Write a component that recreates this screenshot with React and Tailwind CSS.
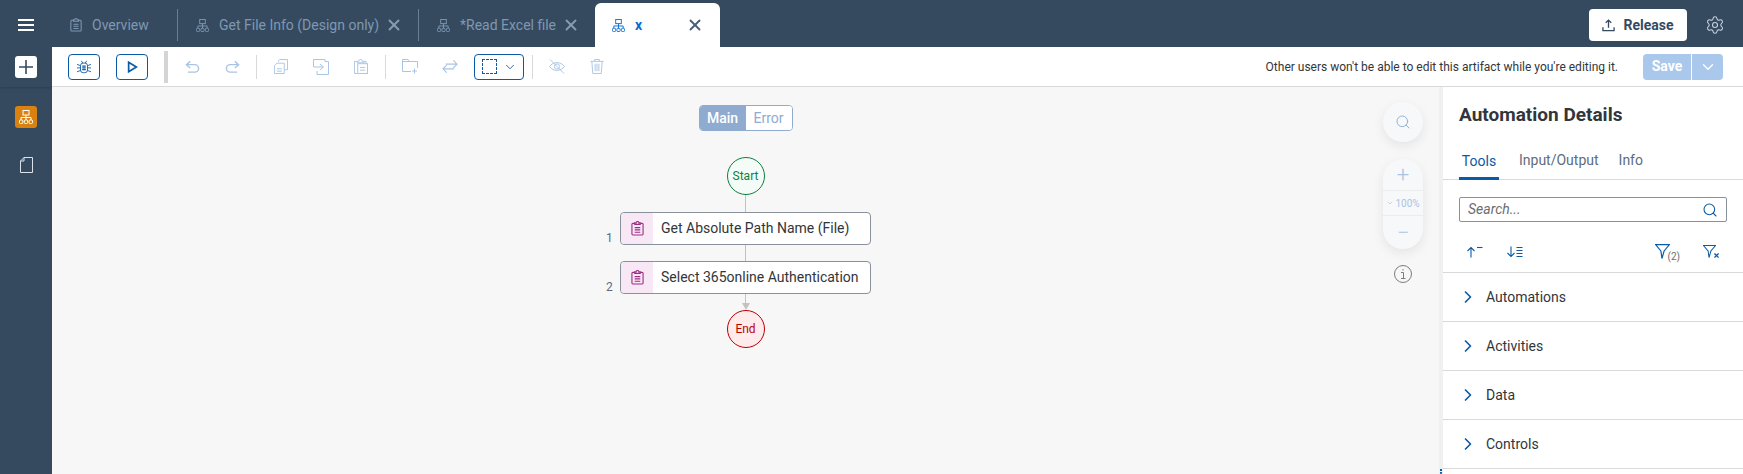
import { ChevronDown, ChevronRight, Search, Settings, X } from "lucide-react";

const Network = ({ className }) => (
  <svg viewBox="0 0 14 14" fill="none" stroke="currentColor" strokeWidth="1" className={className}>
    <rect x="4" y="0.5" width="6" height="4.500" />
    <path d="M7 5V7.500M2 10V7.500H12V10M7 7.500V10" />
    <rect x="0.5" y="10" width="3.400" height="3.500" rx="1" />
    <rect x="5.300" y="10" width="3.400" height="3.500" rx="1" />
    <rect x="10.100" y="10" width="3.400" height="3.500" rx="1" />
  </svg>
);

const Clipboard = ({ className }) => (
  <svg viewBox="0 0 14 16" fill="none" stroke="currentColor" strokeWidth="1.200" className={className}>
    <path d="M4 2.500H2a1 1 0 0 0-1 1v10.500a1 1 0 0 0 1 1h10a1 1 0 0 0 1-1V3.500a1 1 0 0 0-1-1h-2" />
    <path d="M4 3.500V2h1.500a1.500 1.500 0 0 1 3 0H10v1.500z" />
    <path d="M4 7h6M4 9.500h6M4 12h6" />
  </svg>
);

const Bug = ({ className }) => (
  <svg viewBox="0 0 18 16" fill="none" stroke="currentColor" strokeWidth="1" className={className}>
    <rect x="5" y="3.500" width="8" height="11" rx="3" />
    <path d="M7 7h4M7 9h4M7 11h4" strokeWidth="1.400" />
    <path d="M6 1l1.500 2.500M12 1l-1.500 2.500M1 5l4 1.500M17 5l-4 1.500M1 9h4M17 9h-4M1 13.500l4-1.500M17 13.500l-4-1.500" />
  </svg>
);

const Play = ({ className }) => (
  <svg viewBox="0 0 12 14" fill="none" stroke="currentColor" strokeWidth="2" className={className}>
    <path d="M1.500 1.500V12.500L10.500 7z" />
  </svg>
);

const Undo = ({ className, flip }) => (
  <svg viewBox="0 0 16 14" fill="none" stroke="currentColor" strokeWidth="1.500" className={`${className} ${flip ? "-scale-x-100" : ""}`}>
    <path d="M5.500 1L1.500 4.500L5.500 8" />
    <path d="M2 4.500H10.500a4 4 0 0 1 0 8H3" />
  </svg>
);

const CopyDocs = ({ className }) => (
  <svg viewBox="0 0 15 16" fill="none" stroke="currentColor" strokeWidth="1" className={className}>
    <path d="M5 3V1.500L6 .5h8.500v11H11" />
    <path d="M3 4.500H11V15.500H.5V7z" />
    <path d="M3 10.500h5.500M3 13h5.500" />
  </svg>
);

const MoveDoc = ({ className }) => (
  <svg viewBox="0 0 16 16" fill="none" stroke="currentColor" strokeWidth="1" className={className}>
    <path d="M.5 8V.5H12V2.500H15.500V15.500H4V12" />
    <path d="M1 8H10M7 5l3.500 3L7 11" />
  </svg>
);

const Paste = ({ className }) => (
  <svg viewBox="0 0 15 16" fill="none" stroke="currentColor" strokeWidth="1" className={className}>
    <path d="M3.500 2.500H.5V15.500H3.500" />
    <path d="M11 2.500H13V5" />
    <rect x="4" y="5" width="10.500" height="10.500" />
    <path d="M3.500 4V2.500H5a2 2 0 0 1 4 0h2V4z" />
    <path d="M6.500 9h5.500M6.500 12h5.500" />
  </svg>
);

const FolderPlus = ({ className }) => (
  <svg viewBox="0 0 16 15" fill="none" stroke="currentColor" strokeWidth="1" className={className}>
    <path d="M9 12.500H.5V.5H6L7.500 2.500H15.500V9" />
    <path d="M.5 2.500H7.500M12.500 9.500V14.500M10 12H15" />
  </svg>
);

const Swap = ({ className }) => (
  <svg viewBox="0 0 17 16" fill="none" stroke="currentColor" strokeWidth="1.200" className={className}>
    <path d="M4 5.500H16M12 1.500L16 5.500L12 9.500" />
    <path d="M13 10.500H1M5 6.500L1 10.500L5 14.500" />
  </svg>
);

const EyeOff = ({ className }) => (
  <svg viewBox="0 0 17 16" fill="none" stroke="currentColor" strokeWidth="1" className={className}>
    <path d="M.5 8C4.500 2.500 12.500 2.500 16.500 8C12.500 13.500 4.500 13.500 .5 8z" />
    <circle cx="8.500" cy="8" r="2.800" />
    <path d="M1 .5L16 15.500" />
  </svg>
);

const Trash = ({ className }) => (
  <svg viewBox="0 0 14 16" fill="none" stroke="currentColor" strokeWidth="1" className={className}>
    <path d="M0 2.500H14M4.500 2.500V.5H9.500V2.500" />
    <path d="M1.500 2.500L2.500 15.500H11.500L12.500 2.500" />
    <path d="M5 5V13M7 5V13M9 5V13" />
  </svg>
);

const Upload = ({ className }) => (
  <svg viewBox="0 0 14 14" fill="none" stroke="currentColor" strokeWidth="1.400" className={className}>
    <path d="M7 9.500V1.500M4 4L7 1.200L10 4" />
    <path d="M1 9V12.500H13V9" />
  </svg>
);

const SortAsc = ({ className }) => (
  <svg viewBox="0 0 17 12" fill="none" stroke="currentColor" strokeWidth="1.100" className={className}>
    <path d="M5 11.500V1.500M1.500 5L5 1.500L8.500 5" />
    <path d="M11 1.500H16.500" />
  </svg>
);

const SortDesc = ({ className }) => (
  <svg viewBox="0 0 17 12" fill="none" stroke="currentColor" strokeWidth="1.100" className={className}>
    <path d="M5 .5V10.500M1.500 7L5 10.500L8.500 7" />
    <path d="M10.500 1.500H16.500M10.500 4.500H16.500M10.500 7.500H16.500M10.500 10.500H16.500" />
  </svg>
);

const Funnel = ({ className }) => (
  <svg viewBox="0 0 14 14" fill="none" stroke="currentColor" strokeWidth="1.100" className={className}>
    <path d="M.5 .5H13.500L8.500 6.500L6.500 13.500L5.500 6.500z" />
  </svg>
);

const ToolbarSlot = ({ children }) => (
  <div className="w-10 flex justify-center items-center text-[#a9c4e4]">{children}</div>
);

const ToolbarSep = ({ className = "mx-1" }) => <div className={`w-px h-6 bg-[#d9d9d9] ${className}`} />;

const Tab = ({ label, icon, closable = true, width, last }) => (
  <>
    <div className={`flex items-center pl-[18px] text-[#7f98b2] ${width}`}>
      {icon}
      <span className="ml-[10px] whitespace-nowrap">{label}</span>
      {closable && <X className="w-[18px] h-[18px] ml-[6px] text-[#8a9bae]" strokeWidth={2.500} />}
    </div>
    {!last && <div className="w-px h-8 self-center bg-[#6a7e92]" />}
  </>
);

const FlowNode = ({ num, label }) => (
  <div className="relative w-[251px] h-[33px] flex items-center bg-white border border-[#89919a] rounded-[4px]">
    <span className="absolute left-[-15px] top-[16px] text-[12px] text-[#556b82]">{num}</span>
    <div className="w-8 h-full bg-[#f8e8f5] rounded-l-[4px] flex items-center justify-center">
      <Clipboard className="w-[13px] h-[15px] text-[#9c2f84]" />
    </div>
    <span className="ml-[8px] text-[14px] text-[#32363a] whitespace-nowrap">{label}</span>
  </div>
);

const AccordionRow = ({ label }) => (
  <div className="h-[49px] flex items-center border-b border-[#d9d9d9] pl-[15px]">
    <ChevronRight className="w-5 h-5 text-[#0a5aa6]" strokeWidth={2} />
    <span className="ml-[8px] text-[14px] text-[#32363a]">{label}</span>
  </div>
);

export default function App() {
  return (
    <div className="h-screen w-full flex flex-col overflow-hidden text-[14px] bg-white font-['Roboto',sans-serif]">
      {/* Header with tabs */}
      <div className="h-[47px] shrink-0 flex pt-[3px] bg-[#354a5f]">
        <div className="w-[52px] flex items-center justify-center">
          <div className="w-4 flex flex-col gap-[3px]">
            <div className="h-[2px] bg-white" />
            <div className="h-[2px] bg-white" />
            <div className="h-[2px] bg-white" />
          </div>
        </div>
        <Tab label="Overview" closable={false} width="w-[125px]" icon={<Clipboard className="w-[12px] h-[14px]" />} />
        <Tab label="Get File Info (Design only)" width="w-[240px]" icon={<Network className="w-[13px] h-[13px]" />} />
        <Tab label="*Read Excel file" width="w-[176px]" last icon={<Network className="w-[13px] h-[13px]" />} />
        <div className="w-[125px] flex items-center bg-white rounded-t-[6px] pl-[17px]">
          <Network className="w-[13px] h-[13px] text-[#0a6ed1]" />
          <span className="ml-[10px] font-bold text-[#0a6ed1]">x</span>
          <X className="w-[18px] h-[18px] ml-auto mr-[16px] text-[#4b6076]" strokeWidth={2.500} />
        </div>
        <div className="ml-auto flex items-center">
          <button className="w-[98px] h-8 bg-white rounded-[4px] flex items-center justify-center gap-[8px] font-bold text-[#354a5f]">
            <Upload className="w-[13px] h-[13px]" />
            Release
          </button>
          <Settings className="w-5 h-5 mx-[18px] text-[#c6d4e2]" strokeWidth={1.300} />
        </div>
      </div>

      <div className="flex-1 flex min-h-0">
        {/* Left rail */}
        <div className="w-[52px] shrink-0 flex flex-col items-center bg-[#354a5f]">
          <div className="w-full h-[40px] flex justify-center pt-[9px] shadow-[0_1px_2px_rgba(0,0,0,0.15)]">
            <div className="w-[22px] h-[22px] bg-white rounded-[3px] flex items-center justify-center">
              <svg viewBox="0 0 14 14" className="w-[14px] h-[14px] text-[#354a5f]" stroke="currentColor" strokeWidth="1.600">
                <path d="M7 0V14M0 7H14" />
              </svg>
            </div>
          </div>
          <div className="w-[22px] h-[22px] mt-[19px] bg-[#d9820f] rounded-[3px] flex items-center justify-center">
            <Network className="w-[14px] h-[14px] text-white" />
          </div>
          <svg viewBox="0 0 13 16" fill="none" stroke="#dbe2ea" strokeWidth="1" className="w-[13px] h-[16px] mt-[29px]">
            <path d="M4 .5H12.500V15.500H.5V4z" />
            <path d="M4 .5V4H.5" />
          </svg>
        </div>

        <div className="flex-1 min-w-0 flex flex-col">
          {/* Toolbar */}
          <div className="h-[40px] shrink-0 flex items-center pl-4 bg-white border-b border-[#d9d9d9]">
            <button className="w-8 h-[26px] border border-[#0a5aa6] rounded-[4px] flex items-center justify-center text-[#0a5aa6]">
              <Bug className="w-[16px] h-[14px]" />
            </button>
            <button className="w-8 h-[26px] ml-4 border border-[#0a5aa6] rounded-[4px] flex items-center justify-center text-[#0a5aa6]">
              <Play className="w-[11px] h-[12px]" />
            </button>
            <div className="w-1 h-8 ml-4 mr-1 bg-[#d4d4d4]" />
            <ToolbarSlot><Undo className="w-[15px] h-[14px]" /></ToolbarSlot>
            <ToolbarSlot><Undo flip className="w-[15px] h-[14px]" /></ToolbarSlot>
            <ToolbarSep />
            <ToolbarSlot><CopyDocs className="w-[14px] h-[15px]" /></ToolbarSlot>
            <ToolbarSlot><MoveDoc className="w-[16px] h-[16px]" /></ToolbarSlot>
            <ToolbarSlot><Paste className="w-[14px] h-[15px]" /></ToolbarSlot>
            <ToolbarSep />
            <ToolbarSlot><FolderPlus className="w-[16px] h-[15px]" /></ToolbarSlot>
            <ToolbarSlot><Swap className="w-[16px] h-[15px]" /></ToolbarSlot>
            <button className="w-[50px] h-[26px] ml-1 border border-[#0a5aa6] rounded-[4px] flex items-center justify-center gap-[6px]">
              <div className="w-[15px] h-[15px] border border-dashed border-[#0a5aa6]" />
              <ChevronDown className="w-[14px] h-[14px] text-[#0a5aa6]" strokeWidth={1.500} />
            </button>
            <ToolbarSep className="ml-2 mr-1" />
            <ToolbarSlot><EyeOff className="w-[16px] h-[15px]" /></ToolbarSlot>
            <ToolbarSlot><Trash className="w-[14px] h-[15px]" /></ToolbarSlot>
            <span className="ml-auto text-[12px] text-[#32363a] whitespace-nowrap">
              Other users won't be able to edit this artifact while you're editing it.
            </span>
            <div className="flex h-[26px] ml-[25px] mr-[20px] text-white">
              <div className="w-[48px] bg-[#a9c8ec] rounded-l-[4px] flex items-center justify-center font-bold">Save</div>
              <div className="w-[31px] ml-px bg-[#a9c8ec] rounded-r-[4px] flex items-center justify-center">
                <ChevronDown className="w-[18px] h-[18px]" strokeWidth={1.800} />
              </div>
            </div>
          </div>

          <div className="flex-1 min-h-0 flex">
            {/* Canvas */}
            <div className="relative flex-1 min-w-0 flex flex-col items-center pt-[18px] bg-[#f7f7f7]">
              <div className="flex w-[94px] h-[26px] border border-[#8fabcf] rounded-[4px] overflow-hidden">
                <div className="w-[46px] bg-[#8fabcf] flex items-center justify-center text-white font-medium text-[14px]">Main</div>
                <div className="flex-1 bg-white flex items-center justify-center text-[#8fabcf] text-[14px]">Error</div>
              </div>
              <div className="w-[38px] h-[38px] mt-[26px] rounded-full border border-[#107e3e] bg-[#f3fcf6] flex items-center justify-center text-[12px] text-[#107e3e]">
                Start
              </div>
              <div className="w-px h-[17px] bg-[#c2c2c2]" />
              <FlowNode num="1" label="Get Absolute Path Name (File)" />
              <div className="w-px h-[16px] bg-[#c2c2c2]" />
              <FlowNode num="2" label="Select 365online Authentication" />
              <div className="w-px h-[9px] bg-[#c2c2c2]" />
              <div className="w-0 h-0 border-x-[4px] border-x-transparent border-t-[7px] border-t-[#c2c2c2]" />
              <div className="w-[38px] h-[38px] rounded-full border border-[#bb0000] bg-[#ffebeb] flex items-center justify-center text-[12px] text-[#bb0000]">
                End
              </div>

              {/* Zoom controls */}
              <div className="absolute right-[16px] top-[15px] w-10 flex flex-col items-center">
                <div className="w-10 h-10 rounded-full bg-[#f7f8fa] shadow-[0_4px_12px_rgba(0,0,0,0.08)] flex items-center justify-center">
                  <Search className="w-[16px] h-[16px] text-[#8fb1da]" strokeWidth={1.500} />
                </div>
                <div className="w-10 h-[90px] mt-[17px] rounded-full bg-[#f7f8fa] shadow-[0_4px_12px_rgba(0,0,0,0.08)] flex flex-col items-center text-[#a9c4e4]">
                  <div className="h-[32px] w-full flex items-center justify-center border-b border-[#ececec] text-[22px] font-light">+</div>
                  <div className="h-[25px] w-full flex items-center justify-center border-b border-[#ececec] text-[10px] whitespace-nowrap">
                    <ChevronDown className="w-[8px] h-[8px] mr-px" />100%
                  </div>
                  <div className="flex-1 flex items-center justify-center text-[22px] font-light">−</div>
                </div>
                <svg viewBox="0 0 18 18" fill="none" stroke="#7c7c7c" strokeWidth="1" className="w-[18px] h-[18px] mt-[16px]">
                  <circle cx="9" cy="9" r="8.500" />
                  <path d="M7 7.500H9.500V13.500M7 13.500H11.500M9 4V5.500" />
                </svg>
              </div>
            </div>

            {/* Right panel */}
            <div className="w-[304px] shrink-0 bg-white border-l-[4px] border-[#f0f0f0] relative">
              <div className="absolute -left-[3px] bottom-0 w-[2px] h-[5px] border-l-2 border-dotted border-[#0a5aa6]" />
              <div className="h-[42px] pl-[16px] flex items-end text-[19px] font-bold text-[#32363a]">Automation Details</div>
              <div className="h-[51px] flex items-end gap-[20px] pl-[16px] border-b border-[#d9d9d9]">
                <div className="h-[34px] w-[40px] flex justify-center pt-[5px] border-b-[3px] border-[#0a5aa6] text-[#0a5aa6] -mb-px">Tools</div>
                <div className="h-[34px] pt-[5px] text-[#5c6d7e]">Input/Output</div>
                <div className="h-[34px] pt-[5px] text-[#5c6d7e]">Info</div>
              </div>
              <div className="h-[93px] pt-[17px] px-[16px] border-b border-[#d9d9d9]">
                <div className="h-[25px] flex items-center justify-between px-[8px] border border-[#89919a] rounded-[2px]">
                  <span className="italic text-[#6a6d70]">Search...</span>
                  <Search className="w-[16px] h-[16px] text-[#0a5aa6]" strokeWidth={1.600} />
                </div>
                <div className="flex items-center mt-[22px] text-[#0a5aa6]">
                  <SortAsc className="w-[17px] h-[12px] ml-[7px]" />
                  <SortDesc className="w-[17px] h-[12px] ml-[23px]" />
                  <div className="ml-auto flex items-end">
                    <Funnel className="w-[15px] h-[15px]" />
                    <span className="text-[10px] leading-none text-[#6a6d70] -mb-[3px] -ml-[3px]">(2)</span>
                  </div>
                  <div className="relative ml-[23px] mr-[11px]">
                    <Funnel className="w-[13px] h-[13px]" />
                    <X className="absolute -right-[4px] -bottom-[1px] w-[7px] h-[7px]" strokeWidth={4} />
                  </div>
                </div>
              </div>
              <AccordionRow label="Automations" />
              <AccordionRow label="Activities" />
              <AccordionRow label="Data" />
              <AccordionRow label="Controls" />
            </div>
          </div>
        </div>
      </div>
    </div>
  );
}
